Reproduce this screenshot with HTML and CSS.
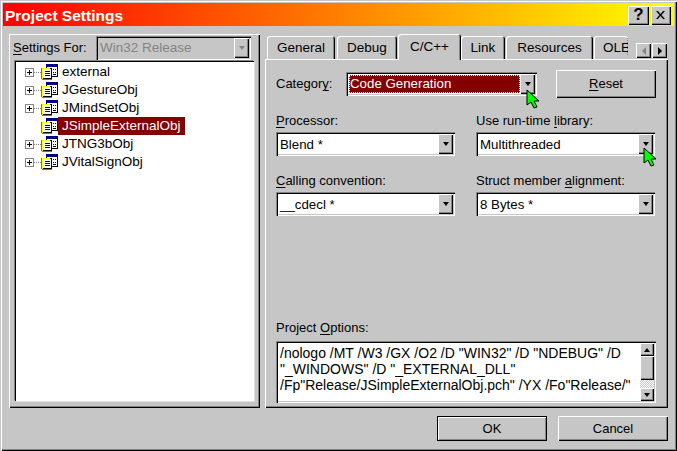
FILE: index.html
```html
<!DOCTYPE html>
<html lang="en">
<head>
<meta charset="utf-8">
<title>Project Settings</title>
<link rel="stylesheet" href="styles.css">
</head>
<body>
<svg class="defs" width="0" height="0" aria-hidden="true">
  <symbol id="proj" viewBox="0 0 17 17">
    <rect x="5.5" y="0.5" width="11" height="12" fill="#fff" stroke="#000"/>
    <rect x="5" y="0" width="12" height="3" fill="#000084"/>
    <path d="M12 5h1v1h-1zM14 5h1v1h-1zM12 8h1v1h-1zM14 8h1v1h-1zM12 10h3v1h-3z" fill="#000"/>
    <rect x="1.5" y="4.5" width="9" height="10" fill="#fff" stroke="#000"/>
    <path d="M0 4h9v1H2v10H0z" fill="#ffff00"/>
    <path d="M0 4h1v11H0zM1 15h10v1H1z" fill="#848400"/>
    <path d="M4 7h5v1H4zM4 9h5v1H4zM4 11h5v1H4z" fill="#000084"/>
  </symbol>
  <symbol id="cursor" viewBox="0 0 14 20">
    <path d="M1 1v15l4-3 3 6 3-1-3-6h5z" fill="#00ff00" stroke="#000" stroke-width="1"/>
  </symbol>
</svg>
<main class="window">
  <header class="titlebar">
    <h1 class="title">Project Settings</h1>
    <div class="caption-buttons">
      <button class="caption-btn help" type="button">?</button>
      <button class="caption-btn close" type="button" aria-label="Close"><svg class="x-icon" viewBox="0 0 9 8"><path d="M0 0h2l2.500 3L7 0h2L5.500 4 9 8H7L4.500 5 2 8H0l3.500-4z" fill="#000"/></svg></button>
    </div>
  </header>

  <div class="content">
    <section class="left-panel">
      <div class="settings-row">
        <label class="settings-label"><u>S</u>ettings For:</label>
        <div class="combo disabled settings-combo">
          <span class="combo-text">Win32 Release</span>
          <span class="combo-btn"><i class="arrow"></i></span>
        </div>
      </div>
      <ul class="tree">
        <li class="node"><span class="plus"></span><svg class="pic"><use href="#proj"/></svg><span class="name">external</span></li>
        <li class="node"><span class="plus"></span><svg class="pic"><use href="#proj"/></svg><span class="name">JGestureObj</span></li>
        <li class="node"><span class="plus"></span><svg class="pic"><use href="#proj"/></svg><span class="name">JMindSetObj</span></li>
        <li class="node"><span class="plus none"></span><svg class="pic"><use href="#proj"/></svg><span class="name selected">JSimpleExternalObj</span></li>
        <li class="node"><span class="plus"></span><svg class="pic"><use href="#proj"/></svg><span class="name">JTNG3bObj</span></li>
        <li class="node"><span class="plus"></span><svg class="pic"><use href="#proj"/></svg><span class="name">JVitalSignObj</span></li>
      </ul>
    </section>

    <section class="right-col">
      <nav class="tabs">
        <div class="tab w-general">General</div>
        <div class="tab w-debug">Debug</div>
        <div class="tab active w-cpp">C/C++</div>
        <div class="tab w-link">Link</div>
        <div class="tab w-res">Resources</div>
        <div class="tab clipped w-ole">OLE</div>
        <div class="tab-scroll">
          <span class="tab-arrow"><i class="tri-left"></i></span>
          <span class="tab-arrow"><i class="tri-right"></i></span>
        </div>
      </nav>
      <div class="tab-panel">
        <div class="category-row">
          <label class="cat-label">Categor<u>y</u>:</label>
          <div class="combo cat-combo">
            <span class="combo-text focus"><span>Code Generation</span></span>
            <span class="combo-btn"><i class="arrow"></i></span>
          </div>
          <button class="btn reset" type="button"><u>R</u>eset</button>
        </div>
        <div class="fields">
          <div class="field">
            <label class="field-label"><u>P</u>rocessor:</label>
            <div class="combo"><span class="combo-text">Blend *</span><span class="combo-btn"><i class="arrow"></i></span></div>
          </div>
          <div class="field">
            <label class="field-label">Use run-time <u>l</u>ibrary:</label>
            <div class="combo"><span class="combo-text">Multithreaded</span><span class="combo-btn"><i class="arrow"></i></span></div>
          </div>
          <div class="field">
            <label class="field-label"><u>C</u>alling convention:</label>
            <div class="combo"><span class="combo-text">__cdecl *</span><span class="combo-btn"><i class="arrow"></i></span></div>
          </div>
          <div class="field">
            <label class="field-label">Struct member <u>a</u>lignment:</label>
            <div class="combo"><span class="combo-text">8 Bytes *</span><span class="combo-btn"><i class="arrow"></i></span></div>
          </div>
        </div>
        <div class="options">
          <label class="field-label options-label">Project <u>O</u>ptions:</label>
          <div class="options-box">
            <p class="options-text">/nologo /MT /W3 /GX /O2 /D "WIN32" /D "NDEBUG" /D<br>"_WINDOWS" /D "_EXTERNAL_DLL"<br>/Fp"Release/JSimpleExternalObj.pch" /YX /Fo"Release/"</p>
            <div class="vscroll">
              <span class="sb-btn"><i class="tri-up"></i></span>
              <span class="sb-thumb"></span>
              <span class="sb-track"></span>
              <span class="sb-btn"><i class="arrow"></i></span>
            </div>
          </div>
        </div>
      </div>
    </section>
  </div>

  <footer class="footer">
    <button class="btn default" type="button">OK</button>
    <button class="btn cancel" type="button">Cancel</button>
  </footer>

  <svg class="cursor cursor-a"><use href="#cursor"/></svg>
  <svg class="cursor cursor-b"><use href="#cursor"/></svg>
</main>
</body>
</html>
```

FILE: styles.css
```css
* { box-sizing: border-box; }
html, body { margin: 0; padding: 0; }
body { width: 677px; height: 451px; overflow: hidden; background: #c6c6c6; font: 13px/16px "Liberation Sans", Arial, sans-serif; color: #000; }
.defs { position: absolute; }
u { text-decoration-thickness: 1px; text-underline-offset: 2px; }

.window {
  position: relative;
  width: 677px;
  height: 451px;
  padding: 3px;
  display: flex;
  flex-direction: column;
  background: #c6c6c6;
  box-shadow: inset 1px 1px #c6c6c6, inset 2px 2px #fff, inset -1px -1px #000, inset -2px -2px #848484;
}

.titlebar {
  height: 23px;
  flex: none;
  display: flex;
  align-items: center;
  justify-content: space-between;
  padding: 0 3px 0 2px;
  background: linear-gradient(to right, #ff0000, #ffff00);
}
.title { margin: 0; padding-top: 3px; font: bold 15.500px/20px "Liberation Sans", sans-serif; color: #fff; }
.caption-buttons { display: flex; gap: 2px; padding-top: 1px; }
.caption-btn {
  width: 21px; height: 19px; padding: 0; border: 0;
  background: #c6c6c6; color: #000;
  box-shadow: inset 1px 1px #fff, inset -1px -1px #000, inset -2px -2px #848484;
  font: bold 17px/18px "Liberation Sans", sans-serif;
  display: flex; align-items: center; justify-content: center;
}
.close { width: 20px; }
.x-icon { width: 9px; height: 8px; display: block; margin: 0 1px 1px 0; }

.content { flex: none; height: 374px; margin: 8px 0 0 6px; display: flex; gap: 5px; }

.left-panel {
  width: 251px;
  padding: 3px 6px 7px 6px;
  display: flex;
  flex-direction: column;
  box-shadow: inset 1px 1px #fff, inset -1px -1px #000, inset -2px -2px #848484;
}
.settings-row { flex: none; height: 22px; display: flex; align-items: center; }
.settings-label { width: 81px; margin-left: -2px; margin-right: 2px; flex: none; }
.settings-combo { width: 155px; height: 22px; }

.combo {
  height: 24px;
  display: flex;
  padding: 2px;
  background: #fff;
  box-shadow: inset 1px 1px #848484, inset 2px 2px #000, inset -1px -1px #fff, inset -2px -2px #c6c6c6;
}
.combo-text { flex: 1; min-width: 0; padding: 2px 0 0 2px; font-size: 13.300px; line-height: 18px; white-space: nowrap; }
.combo-btn {
  width: 15px; flex: none;
  background: #c6c6c6;
  display: flex; align-items: center; justify-content: center;
  box-shadow: inset 1px 1px #fff, inset -1px -1px #000, inset -2px -2px #848484;
}
.arrow { width: 0; height: 0; border: 3px solid transparent; border-top: 4px solid #000; border-bottom: 0; }
.combo.disabled { background: #c6c6c6; }
.disabled .combo-text { color: #848484; padding-top: 1px; font-size: 13.500px; }
.disabled .arrow { border-top-color: #848484; }

.tree {
  flex: 1;
  margin: 2px 0 0 0;
  padding: 1px 0 0 9px;
  list-style: none;
  background: #fff;
  border-top: 1px solid #000;
  border-left: 1px solid #000;
  box-shadow: -1px -1px #848484, 1px 1px #dedede;
  font-size: 13.500px;
}
.node { height: 18px; display: flex; align-items: center; }
.plus {
  position: relative; flex: none;
  width: 9px; height: 9px;
  border: 1px solid #848484;
  background: linear-gradient(#000, #000) center / 5px 1px no-repeat, linear-gradient(#000, #000) center / 1px 5px no-repeat, #fff;
}
.plus::after { content: ""; position: absolute; left: 8px; top: 3px; width: 7px; border-top: 1px dotted #848484; }
.plus.none { visibility: hidden; }
.pic { flex: none; width: 17px; height: 17px; margin-left: 7px; }
.name { padding: 0 4px; height: 18px; line-height: 18px; white-space: nowrap; }
.selected { background: #840000; color: #fff; }

.right-col { width: 403px; display: flex; flex-direction: column; }
.tabs { flex: none; height: 25px; display: flex; align-items: flex-end; padding-left: 2px; font-size: 13.500px; }
.tab {
  height: 23px; flex: none; text-align: center; line-height: 24px;
  background: #c6c6c6;
  border-radius: 3px 3px 0 0;
  box-shadow: inset 1px 1px #fff, inset -1px 0 #000, inset -2px 0 #848484;
}
.w-general { width: 68px; margin-right: 2px; }
.w-debug { width: 60px; margin-right: 1px; }
.w-cpp { width: 63px; }
.w-link { width: 44px; margin-right: 1px; }
.w-res { width: 87px; margin-right: 1px; }
.w-ole { width: 34px; padding-left: 9px; text-align: left; overflow: hidden; white-space: nowrap; box-shadow: inset 0 1px #fff, inset 1px 0 #fff; }
.clipped { position: relative; }
.clipped::after { content: ""; position: absolute; right: 0; top: 2px; bottom: 4px; border-right: 1px dotted #848484; }
.tab.active { position: relative; z-index: 1; height: 26px; margin-bottom: -1px; line-height: 26px; }
.tab-scroll { display: flex; margin: 0 0 1px auto; padding-right: 1px; }
.tab-arrow {
  width: 15px; height: 15px; margin-left: 1px; display: flex; align-items: center; justify-content: center;
  box-shadow: inset 1px 1px #fff, inset -1px -1px #000, inset -2px -2px #848484;
}
.tri-left { width: 0; height: 0; border: 4px solid transparent; border-right: 4px solid #848484; border-left: 0; }
.tri-right { width: 0; height: 0; border: 4px solid transparent; border-left: 4px solid #000; border-right: 0; }
.tri-up { width: 0; height: 0; border: 3px solid transparent; border-bottom: 4px solid #000; border-top: 0; }

.tab-panel {
  flex: 1;
  display: flex;
  flex-direction: column;
  padding: 11px 11px 5px 11px;
  box-shadow: inset 1px 1px #fff, inset -1px -1px #000, inset -2px -2px #848484;
}
.category-row { flex: none; height: 28px; display: flex; align-items: center; }
.cat-label { width: 70px; flex: none; }
.cat-combo { width: 191px; flex: none; }
.focus { padding: 1px 0 1px 1px; }
.focus span { display: block; height: 18px; background: #840000; color: #fff; padding-left: 1px; line-height: 17px; outline: 1px dotted #fff; outline-offset: -1px; }
.btn {
  padding: 0; border: 0; background: #c6c6c6; color: #000;
  font: 13px/16px "Liberation Sans", Arial, sans-serif;
  box-shadow: inset 1px 1px #fff, inset -1px -1px #000, inset -2px -2px #848484;
}
.reset { width: 100px; height: 28px; margin-left: 19px; }

.fields { flex: none; margin-top: 15px; display: grid; grid-template-columns: 179px 179px; column-gap: 21px; row-gap: 17px; }
.field-label { display: block; height: 19px; line-height: 15px; }
.options-label { height: 21px; }
.options { margin-top: auto; }
.options-box {
  height: 62px;
  display: flex;
  padding: 2px;
  width: 380px;
  background: #fff;
  box-shadow: inset 1px 1px #848484, inset 2px 2px #000, inset -1px -1px #fff, inset -2px -2px #c6c6c6;
}
.options-text { flex: 1; margin: 0; padding: 2px 0 0 2px; font-size: 14px; white-space: nowrap; line-height: 16px; }
.vscroll { width: 14px; flex: none; display: flex; flex-direction: column; }
.sb-btn {
  height: 13px; flex: none; background: #c6c6c6; display: flex; align-items: center; justify-content: center;
  box-shadow: inset 1px 1px #fff, inset -1px -1px #000, inset -2px -2px #848484;
}
.sb-thumb { height: 24px; flex: none; background: #c6c6c6; box-shadow: inset 1px 1px #fff, inset -1px -1px #000, inset -2px -2px #848484; }
.sb-track { flex: 1; background: repeating-conic-gradient(#c6c6c6 0 25%, #fff 0 50%) 0 0 / 2px 2px; }

.footer { flex: none; margin-top: 8px; display: flex; justify-content: flex-end; gap: 11px; padding-right: 6px; }
.default, .cancel { width: 110px; height: 25px; }
.default { box-shadow: inset 1px 1px #000, inset -1px -1px #000, inset 2px 2px #fff, inset -2px -2px #848484; }

.cursor { position: absolute; width: 14px; height: 20px; }
.cursor-a { left: 526px; top: 89px; }
.cursor-b { left: 643px; top: 147px; }
```
